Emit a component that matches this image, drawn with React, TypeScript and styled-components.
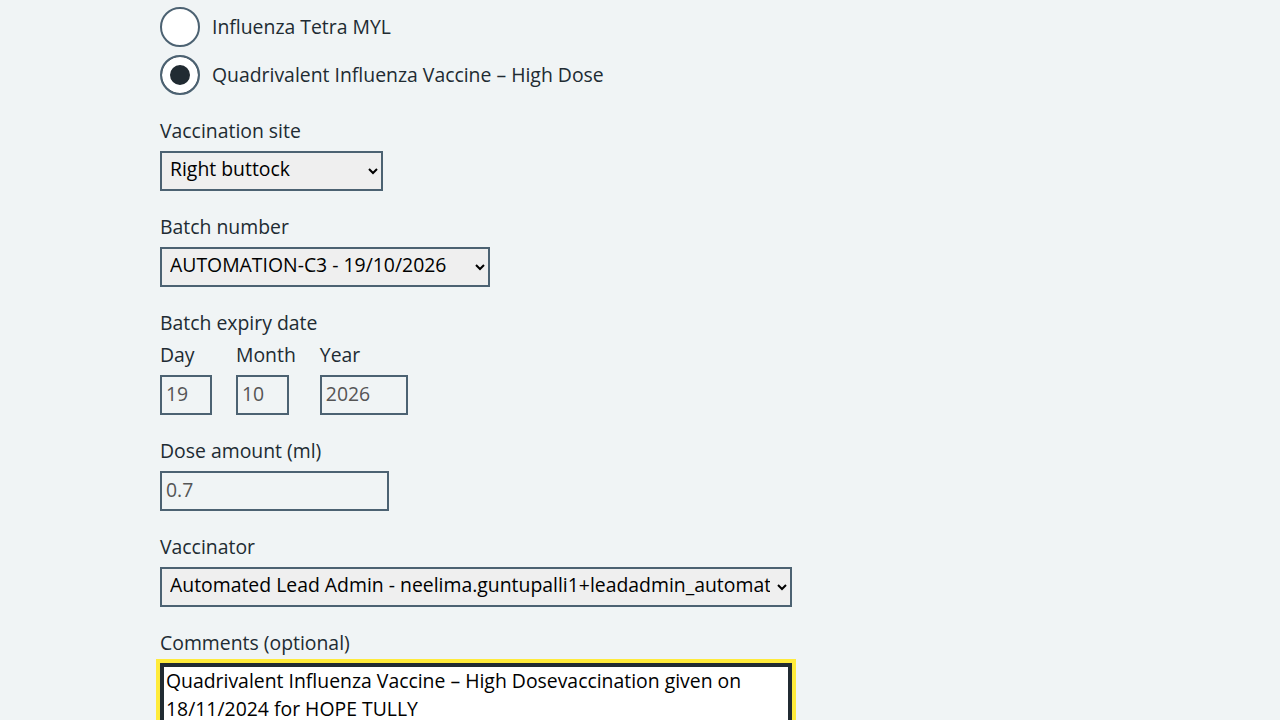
import styled, { createGlobalStyle } from "styled-components";

const GlobalStyle = createGlobalStyle`
  html, body {
    margin: 0;
    padding: 0;
    background-color: #f0f4f5;
  }
  body {
    font-family: "Open Sans", "Noto Sans", sans-serif;
    color: #212b32;
    overflow: hidden;
  }
`;

const Container = styled.main`
  max-width: 960px;
  margin: 0 auto;
  padding-top: 7px;
`;

const Group = styled.div`
  margin-bottom: 24px;
`;

const Fieldset = styled.fieldset`
  border: 0;
  margin: 0 0 24px;
  padding: 0;
  min-width: 0;
`;

const Legend = styled.legend`
  padding: 0 0 4px;
  font-size: 19.4px;
  line-height: 24px;
  margin-bottom: 4px;
`;

const RadioItem = styled.label`
  display: flex;
  align-items: center;
  gap: 12px;
  margin-bottom: 8px;
  font-size: 19.4px;
  line-height: 28px;
  cursor: pointer;

  &:last-child {
    margin-bottom: 0;
  }
`;

const RadioInput = styled.input.attrs({ type: "radio" })`
  appearance: none;
  -webkit-appearance: none;
  box-sizing: border-box;
  width: 40px;
  height: 40px;
  margin: 0;
  border: 2px solid #4c6272;
  border-radius: 50%;
  background: #ffffff;
  flex: none;

  &:checked {
    background: #212b32;
    box-shadow: inset 0 0 0 8px #ffffff;
  }
`;

const Label = styled.label`
  display: block;
  font-size: 19.4px;
  line-height: 24px;
  padding-bottom: 4px;
  margin-bottom: 4px;
`;

const Select = styled.select<{ $width: number }>`
  box-sizing: border-box;
  display: block;
  width: ${(p) => p.$width}px;
  height: 40px;
  padding: 1px 4px 7px;
  border: 2px solid #4c6272;
  border-radius: 0;
  background-color: #efefef;
  color: #000000;
  font-family: inherit;
  font-size: 19.4px;
  line-height: 28px;
`;

const Input = styled.input<{ $width: number }>`
  box-sizing: border-box;
  display: block;
  width: ${(p) => p.$width}px;
  height: 40px;
  padding: 2px 4px 6px;
  margin: 0;
  border: 2px solid #4c6272;
  border-radius: 0;
  background: transparent;
  color: #555555;
  font-family: inherit;
  font-size: 19.4px;
  line-height: 28px;
`;

const DateRow = styled.div`
  display: flex;
  gap: 24px;
`;

const DateItem = styled.div`
  display: flex;
  flex-direction: column;
`;

const TextArea = styled.textarea`
  box-sizing: border-box;
  display: block;
  width: 632px;
  height: 140px;
  padding: 2px 4px 6px;
  margin: 0;
  border: 2px solid #212b32;
  border-radius: 0;
  outline: none;
  box-shadow: inset 0 0 0 2px #212b32, 0 0 0 4px #ffeb3b;
  background: #ffffff;
  color: #000000;
  font-family: inherit;
  font-size: 19.4px;
  line-height: 28px;
  resize: vertical;
`;

const vaccinator =
  "Automated Lead Admin - neelima.guntupalli1+leadadmin_automation@nhs.net";

export default function App() {
  return (
    <>
      <GlobalStyle />
      <Container>
        <Fieldset>
          <RadioItem>
            <RadioInput name="vaccine" value="tetra" />
            Influenza Tetra MYL
          </RadioItem>
          <RadioItem>
            <RadioInput name="vaccine" value="qiv-hd" defaultChecked />
            Quadrivalent Influenza Vaccine – High Dose
          </RadioItem>
        </Fieldset>

        <Group>
          <Label htmlFor="site">Vaccination site</Label>
          <Select id="site" $width={223} defaultValue="rb">
            <option value="rb">Right buttock</option>
          </Select>
        </Group>

        <Group>
          <Label htmlFor="batch">Batch number</Label>
          <Select id="batch" $width={330} defaultValue="c3">
            <option value="c3">AUTOMATION-C3 - 19/10/2026</option>
          </Select>
        </Group>

        <Fieldset>
          <Legend>Batch expiry date</Legend>
          <DateRow>
            <DateItem>
              <Label htmlFor="day">Day</Label>
              <Input id="day" $width={52} defaultValue="19" readOnly />
            </DateItem>
            <DateItem>
              <Label htmlFor="month">Month</Label>
              <Input id="month" $width={53} defaultValue="10" readOnly />
            </DateItem>
            <DateItem>
              <Label htmlFor="year">Year</Label>
              <Input id="year" $width={88} defaultValue="2026" readOnly />
            </DateItem>
          </DateRow>
        </Fieldset>

        <Group>
          <Label htmlFor="dose">Dose amount (ml)</Label>
          <Input id="dose" $width={229} defaultValue="0.7" readOnly />
        </Group>

        <Group>
          <Label htmlFor="vaccinator">Vaccinator</Label>
          <Select id="vaccinator" $width={632} defaultValue="lead">
            <option value="lead">{vaccinator}</option>
          </Select>
        </Group>

        <Group>
          <Label htmlFor="comments">Comments (optional)</Label>
          <TextArea
            id="comments"
            defaultValue="Quadrivalent Influenza Vaccine – High Dosevaccination given on 18/11/2024 for HOPE TULLY"
          />
        </Group>
      </Container>
    </>
  );
}
